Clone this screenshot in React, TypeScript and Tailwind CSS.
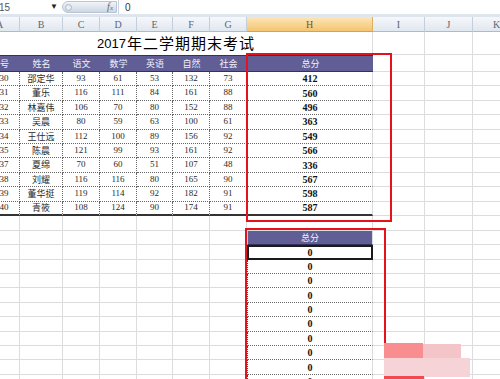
import React from "react";

const W = [
  "w-[40px]",
  "w-[43px]",
  "w-[37px]",
  "w-[37px]",
  "w-[36px]",
  "w-[37px]",
  "w-[37px]",
  "w-[126px]",
  "w-[52px]",
  "w-[48px]",
  "w-[48px]",
];
const LETTERS = ["A", "B", "C", "D", "E", "F", "G", "H", "I", "J", "K"];

const HEAD = ["学号", "姓名", "语文", "数学", "英语", "自然", "社会"];
const DATA: (string | number)[][] = [
  ["1730", "邵定华", 93, 61, 53, 132, 73, 412],
  ["1731", "董乐", 116, 111, 84, 161, 88, 560],
  ["1732", "林嘉伟", 106, 70, 80, 152, 88, 496],
  ["1733", "吴晨", 80, 59, 63, 100, 61, 363],
  ["1734", "王仕远", 112, 100, 89, 156, 92, 549],
  ["1735", "陈晨", 121, 99, 93, 161, 92, 566],
  ["1737", "夏绵", 70, 60, 51, 107, 48, 336],
  ["1738", "刘耀", 116, 116, 80, 165, 90, 567],
  ["1739", "董华挺", 119, 114, 92, 182, 91, 598],
  ["1740", "青筱", 108, 124, 90, 174, 91, 587],
];

const grid = "border-r border-b border-[#dadcdd]";
const cellBase = "shrink-0 flex items-center justify-center overflow-hidden whitespace-nowrap";

function GridCells({ from, h }: { from: number; h: string }) {
  return (
    <>
      {W.slice(from).map((w, i) => (
        <div key={i} className={`${cellBase} ${w} ${h} ${grid}`} />
      ))}
    </>
  );
}

export default function App() {
  const rowsAfter = 10;
  return (
    <div className="relative w-[500px] h-[379px] overflow-hidden bg-white font-['Liberation_Serif','Noto_Sans_CJK_SC',serif] text-[#2a2a2a]">
      {/* formula bar */}
      <div className="h-[14px] flex items-center bg-white">
        <div className="w-[60px] h-full flex items-center justify-between pr-[2px] font-['Liberation_Sans',sans-serif] text-[10px] text-[#555]">
          <span className="-ml-[1px]">15</span>
          <span className="text-[8px] text-[#222] leading-none">▼</span>
        </div>
        <div className="ml-[2px] w-[55px] h-[12px] rounded-l-full bg-gradient-to-b from-[#f1f4f9] to-[#cdd7e4] border border-[#b9c5d4] flex items-center justify-between pl-[2px] pr-[3px]">
          <span className="w-[7px] h-[7px] rounded-full border border-[#a9b7c9] bg-[#e8edf4]" />
          <span className="italic text-[10px] text-[#666] leading-none">
            f<span className="text-[7px]">x</span>
          </span>
        </div>
        <div className="h-full border-l border-[#c9d2de] ml-[1px] flex-1 flex items-center pl-[6px] font-['Liberation_Sans',sans-serif] text-[10px] text-[#333]">
          0
        </div>
      </div>
      <div className="h-[3px] bg-[#dfe5ed]" />

      <div className="-ml-[20px] w-[540px]">
        {/* column headers */}
        <div className="flex h-[15px]">
          {W.map((w, i) =>
            i === 7 ? (
              <div
                key={i}
                className={`${cellBase} ${w} h-full bg-gradient-to-b from-[#fde6b8] to-[#f4c470] border-r border-[#e0b060] border-b border-b-[#f09a30] text-[10px] text-[#6a5a40]`}
              >
                {LETTERS[i]}
              </div>
            ) : (
              <div
                key={i}
                className={`${cellBase} ${w} h-full bg-gradient-to-b from-[#f5f8fc] to-[#e1e7ef] border-r border-[#c5cedb] border-b border-b-[#a9bcd3] text-[10px] text-[#5e6670]`}
              >
                {LETTERS[i]}
              </div>
            )
          )}
        </div>

        {/* title row */}
        <div className="flex h-[23px]">
          <div className={`${cellBase} w-[393px] h-full border-r border-[#dadcdd] text-black`}>
            <span className="font-['Liberation_Sans',sans-serif] text-[13px]">2017</span>
            <span className="font-['Noto_Sans_CJK_SC',sans-serif] text-[15px] tracking-[1px] ml-[1px]">
              年二学期期末考试
            </span>
          </div>
          <GridCells from={8} h="h-full" />
        </div>

        {/* table header */}
        <div className="flex h-[17px]">
          {HEAD.map((t, i) => (
            <div
              key={i}
              className={`${cellBase} ${W[i]} h-full bg-[#615e96] border-t border-b border-[#34315e] text-[9px] text-[#f2f2fa] font-['Noto_Sans_CJK_SC',sans-serif]`}
            >
              {t}
            </div>
          ))}
          <div
            className={`${cellBase} ${W[7]} h-full bg-[#615e96] border-t border-b border-[#34315e] border-l border-l-[#d0d0e0] [border-left-style:dotted] text-[9px] text-[#f2f2fa] font-['Noto_Sans_CJK_SC',sans-serif]`}
          >
            总分
          </div>
          <GridCells from={8} h="h-full" />
        </div>

        {/* data rows */}
        {DATA.map((r, ri) => {
          const last = ri === DATA.length - 1;
          const bottom = last
            ? "border-b-2 border-b-[#333] [border-bottom-style:solid]"
            : "border-b border-b-[#666]";
          return (
            <div key={ri} className="flex h-[14.4px]">
              {r.slice(0, 7).map((v, ci) => (
                <div
                  key={ci}
                  className={`${cellBase} ${W[ci]} h-full border-r border-dotted border-r-[#666] ${bottom} text-[9px] ${
                    ci === 1 ? "font-['Noto_Sans_CJK_SC',sans-serif]" : ""
                  }`}
                >
                  {v}
                </div>
              ))}
              <div
                className={`${cellBase} ${W[7]} h-full border-l border-dotted border-l-[#444] border-r border-r-[#dadcdd] [border-right-style:solid] ${bottom} text-[10px] font-bold text-[#111]`}
              >
                {r[7]}
              </div>
              <GridCells from={8} h="h-full" />
            </div>
          );
        })}

        {/* empty row */}
        <div className="flex h-[15px]">
          <GridCells from={0} h="h-full" />
        </div>

        {/* second table header */}
        <div className="flex h-[14.4px]">
          <GridCells from={0} h="h-full" />
        </div>
        <div className="hidden" />
      </div>

      {/* rows after: built separately to keep H column table */}
      <div className="-ml-[20px] w-[540px] -mt-[14.4px]">
        <div className="flex h-[14.4px]">
          {W.slice(0, 7).map((w, i) => (
            <div key={i} className={`${cellBase} ${w} h-full ${grid}`} />
          ))}
          <div
            className={`${cellBase} ${W[7]} h-full bg-[#615e96] border-b border-[#34315e] border-l border-l-[#d0d0e0] border-r border-r-[#dadcdd] text-[9px] text-[#f2f2fa] font-['Noto_Sans_CJK_SC',sans-serif]`}
          >
            总分
          </div>
          <GridCells from={8} h="h-full" />
        </div>
        {Array.from({ length: rowsAfter }).map((_, ri) => (
          <div key={ri} className="flex h-[14.4px]">
            {W.slice(0, 7).map((w, i) => (
              <div key={i} className={`${cellBase} ${w} h-full ${grid}`} />
            ))}
            {ri === 0 ? (
              <div
                className={`${cellBase} relative ${W[7]} h-full border-2 border-[#1a1a1a] text-[10px] font-bold text-[#111]`}
              >
                0
                <span className="absolute -right-[3px] -bottom-[3px] w-[4px] h-[4px] bg-[#1a1a1a] border border-white" />
              </div>
            ) : (
              <div
                className={`${cellBase} ${W[7]} h-full border-l border-b border-dotted border-l-[#444] border-b-[#666] border-r border-r-[#dadcdd] [border-right-style:solid] text-[10px] font-bold text-[#111]`}
              >
                0
              </div>
            )}
            <GridCells from={8} h="h-full" />
          </div>
        ))}
      </div>

      {/* red highlight boxes */}
      <div className="absolute left-[246px] top-[53px] w-[146px] h-[169px] border-2 border-[#e3121d]" />
      <div className="absolute left-[245px] top-[228px] w-[141px] h-[200px] border-2 border-[#e3121d]" />

      {/* blurred pink smudge */}
      <div className="absolute left-[384px] top-[343px] w-[39px] h-[15px] bg-[#f98e90]" />
      <div className="absolute left-[423px] top-[344px] w-[38px] h-[14px] bg-[#f4c5c8]" />
      <div className="absolute left-[384px] top-[358px] w-[86px] h-[19px] bg-[#f6d3d7]" />
      <div className="absolute left-[384px] top-[376px] w-[40px] h-[3px] bg-[#f04a50]" />
    </div>
  );
}
